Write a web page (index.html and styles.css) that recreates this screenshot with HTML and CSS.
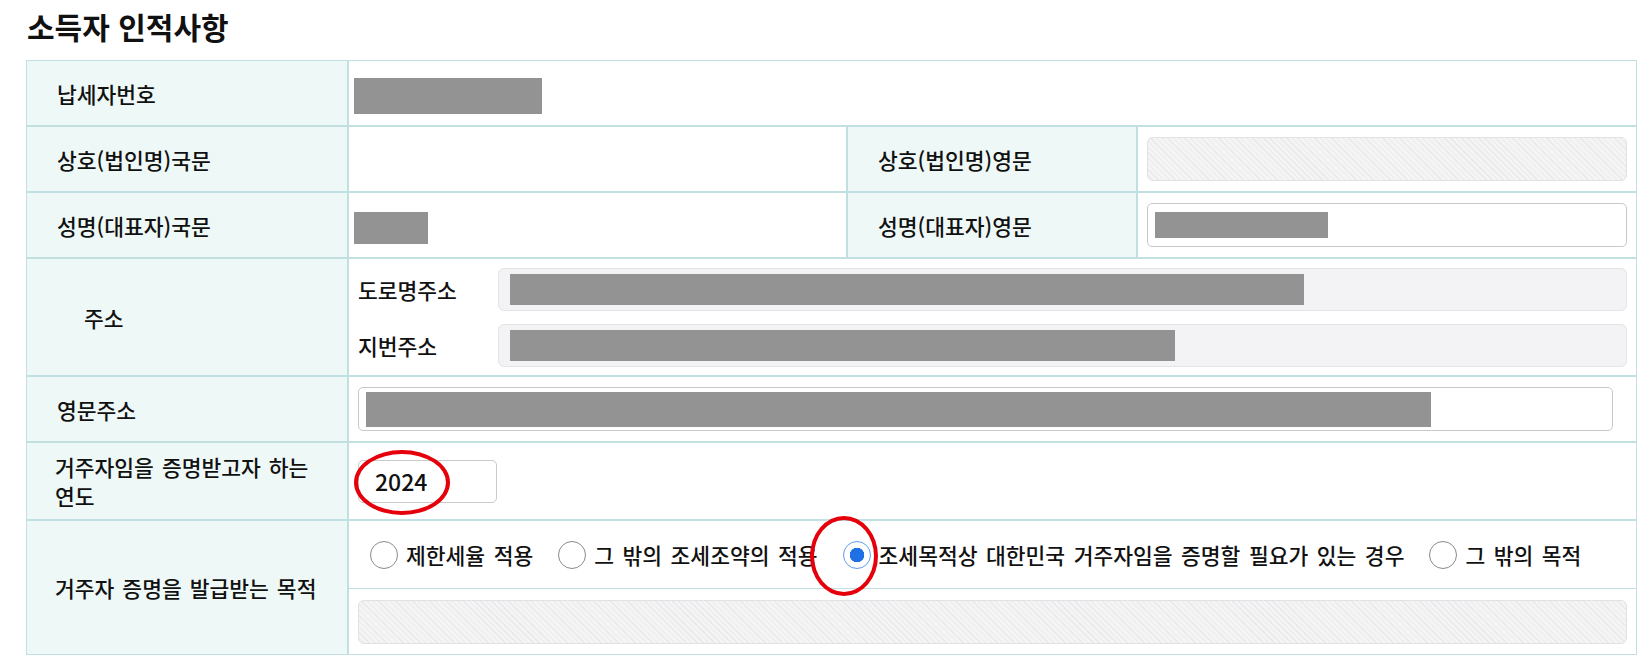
FILE: index.html
```html
<!DOCTYPE html>
<html lang="ko">
<head>
    <meta charset="UTF-8">
    <meta name="viewport" content="width=device-width, initial-scale=1.0">
    <title>소득자 인적사항</title>
    <link rel="stylesheet" href="styles.css">
</head>
<body>

    <h2 class="section-title">소득자 인적사항</h2>

    <div class="info-grid">
        <div class="label">납세자번호</div>
        <div class="value plain span-3"><span class="mask mask-id"></span></div>

        <div class="label">상호(법인명)국문</div>
        <div class="value plain"></div>
        <div class="label">상호(법인명)영문</div>
        <div class="value"><div class="field disabled"></div></div>

        <div class="label">성명(대표자)국문</div>
        <div class="value plain"><span class="mask mask-name"></span></div>
        <div class="label">성명(대표자)영문</div>
        <div class="value"><div class="field"><span class="mask mask-name-en"></span></div></div>

        <div class="label label-short">주소</div>
        <div class="value address span-3">
            <div class="addr-row">
                <span class="sub-label">도로명주소</span>
                <div class="field readonly"><span class="mask mask-road"></span></div>
            </div>
            <div class="addr-row">
                <span class="sub-label">지번주소</span>
                <div class="field readonly"><span class="mask mask-lot"></span></div>
            </div>
        </div>

        <div class="label">영문주소</div>
        <div class="value span-3"><div class="field field-en"><span class="mask mask-addr-en"></span></div></div>

        <div class="label label-long">거주자임을 증명받고자 하는 연도</div>
        <div class="value span-3 marked">
            <input class="year-input" type="text" value="2024">
            <span class="circle-mark mark-year"></span>
        </div>

        <div class="label label-long">거주자 증명을 발급받는 목적</div>
        <div class="value purpose span-3">
            <div class="radio-line">
                <label class="radio-opt"><input type="radio" name="purpose">제한세율 적용</label>
                <label class="radio-opt"><input type="radio" name="purpose">그 밖의 조세조약의 적용</label>
                <label class="radio-opt"><input type="radio" name="purpose" checked>조세목적상 대한민국 거주자임을 증명할 필요가 있는 경우</label>
                <label class="radio-opt"><input type="radio" name="purpose">그 밖의 목적</label>
                <span class="circle-mark mark-radio"></span>
            </div>
            <div class="purpose-input">
                <div class="field disabled"></div>
            </div>
        </div>
    </div>

</body>
</html>
```

FILE: styles.css
```css
body {
    margin: 0;
    padding: 8px 12px 0 26px;
    font-family: "Noto Sans CJK KR", "Noto Sans", sans-serif;
    font-weight: 500;
    color: #111;
    background: #fff;
}
.section-title {
    margin: 0 0 16px 1px;
    font-size: 30px;
    font-weight: 700;
    line-height: 36px;
    color: #111;
}
.info-grid {
    display: grid;
    grid-template-columns: 320px 497px 288px 1fr;
    grid-template-rows: 64px 64px 64px 116px 64px 76px 133px;
    gap: 2px;
    padding: 1px;
    background: #c2dfe2;
}
.info-grid > div {
    background: #fff;
    display: flex;
    align-items: center;
}
.info-grid > .label {
    background: #eef8f7;
    padding: 0 20px 0 30px;
    font-size: 21.5px;
    line-height: 29px;
    word-spacing: 2px;
    word-break: keep-all;
}
.info-grid > .label-short {
    padding-left: 57px;
}
.info-grid > .label-long {
    padding-left: 28px;
}
.value {
    padding: 0 9px;
}
.value.plain {
    padding-left: 5px;
}
.span-3 {
    grid-column: span 3;
}
.mask {
    display: block;
    background: #939393;
}
.mask-id {
    width: 188px;
    height: 36px;
    margin-top: 6px;
}
.mask-name {
    width: 74px;
    height: 32px;
    margin-top: 6px;
}
.mask-name-en {
    width: 173px;
    height: 26px;
}
.mask-road {
    width: 794px;
    height: 31px;
}
.mask-lot {
    width: 665px;
    height: 31px;
}
.mask-addr-en {
    width: 1065px;
    height: 35px;
}

/* inputs */
.field {
    box-sizing: border-box;
    flex: 1;
    height: 44px;
    border: 1px solid #c9c9c9;
    border-radius: 5px;
    background: #fff;
    display: flex;
    align-items: center;
    padding-left: 7px;
}
.field.readonly {
    height: 43px;
    background: #f3f3f5;
    border-color: #e3e3e8;
    border-radius: 6px;
    padding-left: 11px;
}
.field.disabled {
    border-color: #e1e1e6;
    border-radius: 6px;
    background: repeating-linear-gradient(45deg, #f4f4f5 0 3px, #e9e9eb 3px 4px);
}
.field-en {
    flex: none;
    width: 1255px;
}
.address {
    flex-direction: column;
    justify-content: center;
    align-items: stretch !important;
    gap: 13px;
}
.addr-row {
    display: flex;
    align-items: center;
}
.sub-label {
    width: 140px;
    font-size: 21.5px;
}
.year-input {
    box-sizing: border-box;
    width: 139px;
    height: 43px;
    border: 1px solid #cacaca;
    border-radius: 5px;
    padding: 0 0 0 16px;
    font-family: inherit;
    font-weight: 500;
    font-size: 23px;
    color: #111;
    background: #fff;
}

/* purpose radios */
.purpose {
    flex-direction: column;
    align-items: stretch !important;
    padding: 0;
}
.radio-line {
    position: relative;
    height: 67px;
    border-bottom: 1px solid #c2dfe2;
    display: flex;
    align-items: center;
    padding-left: 21px;
}
.radio-opt {
    display: flex;
    align-items: center;
    gap: 8px;
    margin-right: 25px;
    font-size: 21.5px;
    word-spacing: 2.5px;
}
.radio-opt input {
    appearance: none;
    box-sizing: border-box;
    width: 28px;
    height: 28px;
    margin: 0;
    border: 1.5px solid #8a8a8a;
    border-radius: 50%;
    background: #fff;
}
.radio-opt input:checked {
    border-color: #5d9cf2;
    background: radial-gradient(circle, #1f6fe5 0 7px, #fff 7.5px);
}
.purpose-input {
    flex: 1;
    display: flex;
    padding: 11px 9px 10px;
}

/* hand drawn red marks */
.marked {
    position: relative;
}
.circle-mark {
    position: absolute;
    box-sizing: border-box;
    border: 4px solid #e5000b;
    border-radius: 50%;
}
.mark-year {
    left: 5px;
    top: 7px;
    width: 96px;
    height: 65px;
}
.mark-radio {
    left: 461px;
    top: -5px;
    width: 68px;
    height: 80px;
}
```
